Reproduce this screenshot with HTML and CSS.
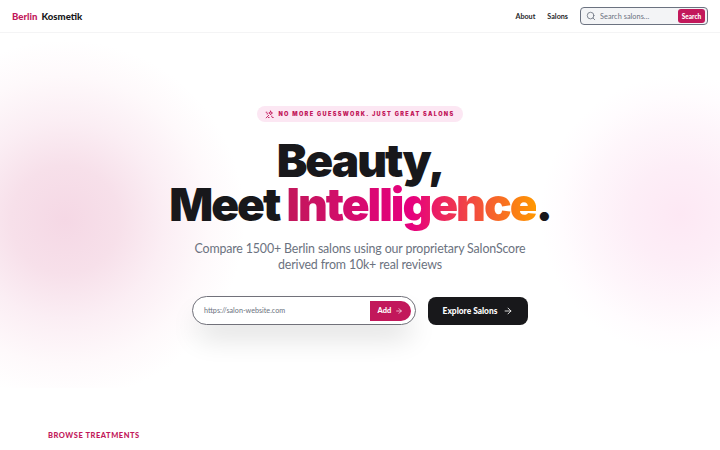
FILE: index.html
```html
<!DOCTYPE html>
<html lang="en">
<head>
<meta charset="utf-8">
<title>Berlin Kosmetik</title>
<link rel="stylesheet" href="styles.css">
</head>
<body>
<header class="nav">
  <a class="logo"><span class="logo-a">Berlin</span> <span class="logo-b">Kosmetik</span></a>
  <nav class="nav-right">
    <a class="nav-link">About</a>
    <a class="nav-link">Salons</a>
    <form class="search">
      <svg class="search-icon" viewBox="0 0 24 24" width="10" height="10"><circle cx="11" cy="11" r="8"/><path d="m21 21-4.3-4.3"/></svg>
      <span class="search-text">Search salons...</span>
      <span class="search-btn">Search</span>
    </form>
  </nav>
</header>
<main class="hero">
  <div class="glow glow-left"></div>
  <div class="glow glow-right"></div>
  <div class="hero-inner">
    <div class="badge">
      <svg class="badge-icon" viewBox="0 0 24 24" width="9" height="9"><path d="M15 3l1.5 3.5L20 8l-3.500 1.500L15 13l-1.500-3.500L10 8l3.500-1.500zM3 21l7-7M6 9v2M3 6h2M18 16v2M20 20h2M9 20h2"/></svg>
      <span>NO MORE GUESSWORK. JUST GREAT SALONS</span>
    </div>
    <h1 class="title">Beauty,<br>Meet <span class="grad">Intelligence</span>.</h1>
    <p class="sub">Compare 1500+ Berlin salons using our proprietary SalonScore<br>derived from 10k+ real reviews</p>
    <div class="cta">
      <div class="url-box">
        <span class="url-text">https://salon-website.com</span>
        <span class="add-btn">Add
          <svg viewBox="0 0 24 24" width="8" height="8"><path d="M5 12h14M12 5l7 7-7 7"/></svg>
        </span>
      </div>
      <a class="explore">Explore Salons
        <svg viewBox="0 0 24 24" width="10" height="10"><path d="M5 12h14M12 5l7 7-7 7"/></svg>
      </a>
    </div>
  </div>
</main>
<section class="browse"><h2>BROWSE TREATMENTS</h2></section>
</body>
</html>
```
FILE: styles.css
```css
* { box-sizing: border-box; }
html, body { margin: 0; height: 450px; overflow: hidden; background: #fff; }
body { font-family: Lato, "Noto Sans", sans-serif; color: #18181b; }
svg { fill: none; stroke: currentColor; stroke-width: 2; stroke-linecap: round; stroke-linejoin: round; display: block; flex: none; }

.nav { height: 33px; display: flex; align-items: center; justify-content: space-between; padding: 0 12px; border-bottom: 1px solid #f4f4f5; background: #fff; }
.logo { font-size: 9.6px; font-weight: 900; display: flex; gap: 4px; }
.logo-a { color: #c2185b; }
.logo-b { color: #18181b; }
.nav-right { display: flex; align-items: center; }
.nav-link { font-size: 7.2px; font-weight: 700; color: #27272a; margin-right: 12px; }
.search { width: 128px; height: 18px; display: flex; align-items: center; padding: 0 2px 0 5px; background: #f3f4f6; border: 1px solid #6b7280; border-radius: 4px; }
.search-icon { color: #6b7280; }
.search-text { font-size: 7.3px; color: #6b7280; margin-left: 4px; flex: 1; letter-spacing: .05px; }
.search-btn { font-size: 6.5px; font-weight: 900; color: #fff; background: #c2185b; border-radius: 3px; height: 14px; width: 27px; display: flex; align-items: center; justify-content: center; }

.hero { position: relative; height: 355px; overflow: hidden; background: #fff; }
.glow { position: absolute; border-radius: 50%; }
.glow-left { left: -115px; top: 7px; width: 360px; height: 360px; background: radial-gradient(closest-side, #f5d8e5 0%, #f7e0ea 30%, #fbeef4 55%, #fef9fb 80%, rgba(255,255,255,0) 100%); }
.glow-right { left: 540px; top: 42px; width: 280px; height: 280px; background: radial-gradient(closest-side, #fde8f4 0%, #fdeef7 35%, #fef6fb 65%, #fffcfe 85%, rgba(255,255,255,0) 100%); }
.hero-inner { position: relative; display: flex; flex-direction: column; align-items: center; padding-top: 73px; }

.badge { width: 206px; height: 16px; display: flex; align-items: center; justify-content: center; gap: 4px; border-radius: 8px; background: #fce7f3; color: #c2185b; font-family: Inter, Lato, sans-serif; font-size: 5.6px; font-weight: 900; letter-spacing: 1.35px; white-space: nowrap; }
.badge-icon { stroke-width: 2.4; }
.title { margin: 16px 0 0; font-family: Inter, Lato, sans-serif; font-size: 46px; line-height: 44px; font-weight: 900; text-align: center; letter-spacing: -2px; color: #18181b; }
.grad { background: linear-gradient(90deg, #c2185b, #e6007e 50%, #ff9800); -webkit-background-clip: text; background-clip: text; color: transparent; }
.sub { margin: 15px 0 0; font-size: 12.4px; line-height: 16px; color: #6b7280; text-align: center; letter-spacing: -.15px; }

.cta { margin-top: 23px; display: flex; align-items: center; gap: 12px; }
.url-box { width: 224px; height: 29px; display: flex; align-items: center; justify-content: space-between; padding: 0 4px 0 11px; background: #fff; border: 1px solid #71717a; border-radius: 15px; box-shadow: 0 16px 28px -4px rgba(0,0,0,.14); }
.url-text { font-size: 7.2px; color: #6b7280; }
.add-btn { width: 41px; height: 20px; display: flex; align-items: center; justify-content: center; gap: 4px; background: #c2185b; color: #fff; font-size: 7.5px; font-weight: 900; border-radius: 0 10px 10px 0; }
.explore { width: 100px; height: 28px; display: flex; align-items: center; justify-content: center; gap: 6px; background: #18181b; color: #fff; font-size: 8.4px; font-weight: 900; border-radius: 8px; }

.browse { padding: 43px 48px 0; }
.browse h2 { margin: 0; font-size: 7.5px; line-height: 10px; font-weight: 900; letter-spacing: .55px; color: #c2185b; }
```
